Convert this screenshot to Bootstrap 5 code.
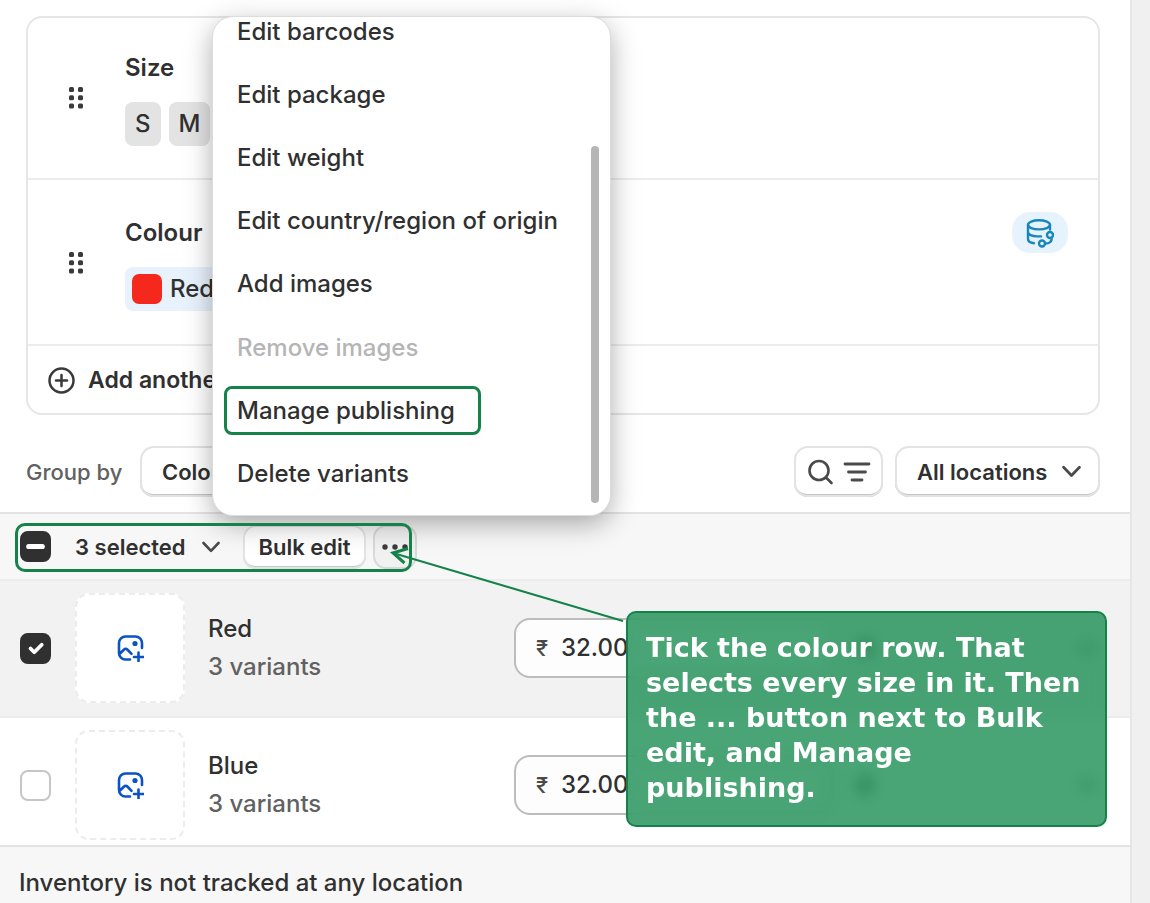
<!DOCTYPE html>
<html lang="en">
<head>
<meta charset="utf-8">
<meta name="viewport" content="width=device-width, initial-scale=1">
<title>Product variants</title>
<link rel="stylesheet" href="https://cdn.jsdelivr.net/npm/bootstrap@5.3.0/dist/css/bootstrap.min.css">
<style>
  :root { --ink: #303030; --muted: #616161; --line: #e3e3e3; --guide: #16824b; }
  body { font-family: Inter, "Liberation Sans", sans-serif; font-size: 24px; font-weight: 450; line-height: 30px; color: var(--ink); background: #f0f0f0; }
  svg { display: block; flex: none; }
  .page { min-height: 100vh; margin-right: 18px; background: #fff; border-right: 2px solid #e6e6e6; }
  .subtle { color: var(--muted); }
  .options { margin: 16px 30px 0 26px; border: 2px solid #e6e6e6; border-radius: 16px; }
  .option { padding: 35px 30px 32px 41px; border-bottom: 2px solid #ececec; }
  .option + .option { padding-top: 38px; padding-bottom: 33px; }
  .option-body { gap: 19px; padding-left: 42px; }
  .grip { margin-bottom: 4px; }
  .heading, .btn { font-weight: 600; }
  .chip { height: 44px; padding: 7px 10px; background: #e3e3e3; border-radius: 8px; }
  .chip-blue { background: #e8f2fd; padding-left: 7px; }
  .swatch { width: 30px; height: 30px; border-radius: 7px; background: #f4281d; }
  .linked { width: 56px; height: 41px; border-radius: 18px; background: #e6f3fd; margin-top: -6px; }
  .btn { font-size: 22px; line-height: 30px; color: var(--ink); border: 0; padding: 0; }
  .add { padding: 19px 20px 18px; }
  .add .btn { gap: 13px; font-size: 23px; }
  .tools { padding: 31px 30px 15px 26px; }
  .tools .subtle { font-size: 22px; width: 98px; white-space: nowrap; }
  .tools .btn { height: 51px; border-radius: 14px; background: #fff; box-shadow: inset 0 0 0 2px #e3e3e3, inset 0 -3px 0 #c4c4c4; }
  .grouping { padding: 0 22px; width: 150px; }
  .finder { width: 89px; }
  .tools .places { width: 205px; margin-left: 12px; padding: 0 19px 0 22px; }
  .bulkbar { height: 67px; padding-left: 20px; background: #f7f7f7; border-top: 2px solid #e3e3e3; }
  .bulkbar .bulk, .bulkbar .more { height: 44px; border-radius: 13px; background: #fff; box-shadow: inset 0 0 0 2px #e3e3e3, inset 0 -3px 0 #c8c8c8; }
  .bulkbar .count { width: 145px; }
  .bulkbar .bulk { width: 123px; margin-left: 23px; }
  .bulkbar .more { width: 44px; margin-left: 7px; background: #f1f1f1; box-shadow: inset 0 0 0 2px #d9d9d9; }
  .form-check-input.tick { width: 31px; height: 31px; margin: 0; border: 2px solid #c6c6c6; border-radius: 8px; flex: none; box-shadow: none; }
  .form-check-input.tick:checked, .form-check-input.tick:indeterminate { background-color: var(--ink); border-color: var(--ink); }
  .form-check-input.tick:checked { background-size: 25px; }
  .form-check-input.tick:indeterminate { background-size: 34px; }
  .product { padding: 12px 20px 5px; border-top: 2px solid #ececec; }
  .product.picked { background: #f2f2f2; padding-bottom: 13px; }
  .thumb { width: 110px; height: 110px; margin-left: 24px; border: 2px dashed #ececec; border-radius: 14px; background: #fff; }
  .who { width: 306px; margin-left: 23px; line-height: 38px; }
  .price { width: 320px; height: 60px; padding-left: 20px; border: 2px solid #bcbcbc; border-radius: 16px; background: #fdfdfd; }
  .price input { font-size: 24px; font-weight: 450; color: var(--ink); border: 0; background: none; padding: 0; margin-left: 10px; width: 200px; }
  .price label { color: #4a4a4a; width: 15px; font-size: 22px; }
  .stock { background: #f7f7f7; border-top: 2px solid var(--line); padding: 21px 19px 5px; }

  .actions { left: 213px; bottom: 64px; width: 397px; height: 498px; border-radius: 20px; background: #fff; overflow: hidden; padding-bottom: 9px; box-shadow: 0 0 0 1px #dcdcdc, 0 8px 28px rgba(0,0,0,.34); z-index: 2; }
  .actions li { flex: 1; }
  .actions li > button { position: relative; width: 100%; height: 100%; border: 0; background: none; padding: 0 24px; text-align: left; font-weight: 450; color: var(--ink); }
  .actions li:first-child { flex: 0 0 44px; }
  .actions li:first-child > button { padding-bottom: 16px; }
  .actions button:disabled { color: #b5b5b5; }
  .thumbbar { right: 11px; bottom: 12px; width: 8px; height: 357px; border-radius: 4px; background: #b5b5b5; }
  .guide-ring { border: 3px solid var(--guide); border-radius: 10px; pointer-events: none; }
  .ring-bar { left: 15px; top: 9px; width: 397px; height: 49px; z-index: 3; }
  .ring-item { left: 11px; top: 7px; width: 257px; height: 49px; border-radius: 8px; }
  .guide-line { left: 380px; top: 30px; z-index: 4; pointer-events: none; }
  .guide-note { left: 626px; top: 97px; width: 481px; padding: 17px 18px 20px; border: 2px solid var(--guide); border-radius: 10px; background: rgba(22,138,80,.78); backdrop-filter: blur(8px); color: #fff; font: bold 27px/35px "DejaVu Sans", sans-serif; z-index: 3; }
</style>
</head>
<body>
<svg class="d-none" aria-hidden="true">
  <symbol id="grip" viewBox="0 0 14 22"><g fill="#3a3a3a"><rect width="5" height="5" rx="1.500"/><rect x="9" width="5" height="5" rx="1.500"/><rect y="8.300" width="5" height="5" rx="1.500"/><rect x="9" y="8.300" width="5" height="5" rx="1.500"/><rect y="16.600" width="5" height="5" rx="1.500"/><rect x="9" y="16.600" width="5" height="5" rx="1.500"/></g></symbol>
  <symbol id="down" viewBox="0 0 18 12"><path d="M1.500 2 9 9.800 16.500 2" fill="none" stroke="#4a4a4a" stroke-width="2.600" stroke-linecap="round" stroke-linejoin="round"/></symbol>
  <symbol id="photo" viewBox="0 0 28 28"><g fill="none" stroke="#0b52c4" stroke-width="2.600" stroke-linecap="round" stroke-linejoin="round"><path d="M14 25.500H9.500A6.500 6.500 0 0 1 3 19V9a6.500 6.500 0 0 1 6.500-6.500h10A6.500 6.500 0 0 1 26 9v5M3.500 20l4.600-4.500a2.200 2.200 0 0 1 3.200 0l4.200 4.300M22.500 18.500v9M18 23h9.500"/></g><circle cx="19" cy="9.500" r="2.600" fill="#0b52c4"/></symbol>
</svg>

<main class="page d-flex flex-column">
  <section class="options">
    <div class="option d-flex align-items-center">
      <svg class="grip" width="14" height="22"><use href="#grip"/></svg>
      <div class="option-body d-flex flex-column flex-grow-1">
        <div class="heading">Size</div>
        <div class="d-flex gap-2"><span class="chip">S</span><span class="chip">M</span></div>
      </div>
    </div>
    <div class="option d-flex align-items-center">
      <svg class="grip" width="14" height="22"><use href="#grip"/></svg>
      <div class="option-body d-flex flex-column flex-grow-1">
        <div class="heading">Colour</div>
        <div class="d-flex"><span class="chip chip-blue d-flex align-items-center gap-2"><span class="swatch"></span>Red</span></div>
      </div>
      <span class="linked d-flex align-items-center justify-content-center align-self-start">
        <svg width="30" height="30" viewBox="0 0 30 30" fill="none" stroke="#1985bd" stroke-width="2.400" stroke-linecap="round"><ellipse cx="14" cy="6.800" rx="11" ry="4.600"/><path d="M3 7v14c0 2.500 2.500 3.800 6 4.200M25 7v4.500M3 14c0 2.600 4 4.400 9 4.400h4"/><circle cx="25" cy="17" r="3"/><circle cx="17" cy="25.500" r="3"/><path d="M26.500 20c.8 3.500-2.500 5.500-6 5.500"/></svg>
      </span>
    </div>
    <div class="add">
      <button type="button" class="btn d-flex align-items-center">
        <svg width="27" height="27" viewBox="0 0 27 27" fill="none" stroke="#3a3a3a" stroke-width="2.500" stroke-linecap="round"><circle cx="13.500" cy="13.500" r="12"/><path d="M13.500 8v11M8 13.500h11"/></svg>
        Add another option
      </button>
    </div>
  </section>

  <div class="tools d-flex align-items-center">
    <span class="subtle">Group by</span>
    <button type="button" class="btn grouping ms-3 text-start">Colour</button>
    <button type="button" class="btn finder ms-auto d-flex align-items-center justify-content-center gap-2" aria-label="Search and filter">
      <svg width="28" height="26" viewBox="0 0 28 26" fill="none" stroke="#4a4a4a" stroke-width="2.600" stroke-linecap="round"><circle cx="12" cy="11.500" r="9.500"/><path d="m19 18.500 5.500 5.500"/></svg>
      <svg width="28" height="20" viewBox="0 0 28 20" stroke="#4a4a4a" stroke-width="2.800" stroke-linecap="round"><path d="M2 2h24M5.500 10h17M9 18h10"/></svg>
    </button>
    <button type="button" class="btn places d-flex align-items-center justify-content-between">All locations<svg width="19" height="13"><use href="#down"/></svg></button>
  </div>

  <div class="bulkbar position-relative d-flex align-items-center">
    <input class="form-check-input tick" type="checkbox" id="all" aria-label="Select all variants">
    <button type="button" class="btn count d-flex align-items-center justify-content-between ms-4">3 selected<svg width="18" height="12"><use href="#down"/></svg></button>
    <button type="button" class="btn bulk">Bulk edit</button>
    <button type="button" class="btn more d-flex align-items-center justify-content-center" aria-label="More actions">
      <svg width="26" height="6" viewBox="0 0 26 6" fill="#3a3a3a"><circle cx="3" cy="3" r="2.700"/><circle cx="13" cy="3" r="2.700"/><circle cx="23" cy="3" r="2.700"/></svg>
    </button>

    <div class="actions position-absolute">
      <ul class="list-unstyled d-flex flex-column mb-0 h-100">
        <li><button type="button">Edit barcodes</button></li>
        <li><button type="button">Edit package</button></li>
        <li><button type="button">Edit weight</button></li>
        <li><button type="button">Edit country/region of origin</button></li>
        <li><button type="button">Add images</button></li>
        <li><button type="button" disabled>Remove images</button></li>
        <li><button type="button">Manage publishing<span class="guide-ring ring-item position-absolute"></span></button></li>
        <li><button type="button">Delete variants</button></li>
      </ul>
      <span class="thumbbar position-absolute"></span>
    </div>

    <span class="guide-ring ring-bar position-absolute"></span>
    <svg class="guide-line position-absolute" width="250" height="84" viewBox="0 0 250 84" fill="none" stroke="#16824b"><path d="M13 9 243 77" stroke-width="2"/><path d="M28 4.500 13 9l11.500 10" stroke-width="3"/></svg>
    <div class="guide-note position-absolute">Tick the colour row. That selects every size in it. Then the ... button next to Bulk edit, and Manage publishing.</div>
  </div>

  <div class="product picked d-flex align-items-center">
    <input class="form-check-input tick" type="checkbox" id="red" aria-label="Select Red" checked>
    <div class="thumb d-flex align-items-center justify-content-center"><svg width="28" height="28"><use href="#photo"/></svg></div>
    <div><label class="who d-block" for="red">Red<br><span class="subtle">3 variants</span></label></div>
    <div class="price d-flex align-items-center"><label for="redprice">₹</label><input id="redprice" type="text" value="32.00"></div>
    <svg class="ms-4" width="14" height="18"><ellipse cx="7" cy="9" rx="7" ry="9" fill="#555"/></svg>
    <svg class="ms-auto me-3" width="14" height="14" viewBox="0 0 14 14"><path d="m1 4 6 6 6-6" fill="none" stroke="#444" stroke-width="4"/></svg>
  </div>
  <div class="product d-flex align-items-center">
    <input class="form-check-input tick" type="checkbox" id="blue" aria-label="Select Blue">
    <div class="thumb d-flex align-items-center justify-content-center"><svg width="28" height="28"><use href="#photo"/></svg></div>
    <div><label class="who d-block" for="blue">Blue<br><span class="subtle">3 variants</span></label></div>
    <div class="price d-flex align-items-center"><label for="blueprice">₹</label><input id="blueprice" type="text" value="32.00"></div>
    <svg class="ms-4" width="14" height="18"><ellipse cx="7" cy="9" rx="7" ry="9" fill="#555"/></svg>
    <svg class="ms-auto me-3" width="14" height="14" viewBox="0 0 14 14"><path d="m1 4 6 6 6-6" fill="none" stroke="#444" stroke-width="4"/></svg>
  </div>
  <footer class="stock flex-grow-1">Inventory is not tracked at any location</footer>
</main>
<script src="https://cdn.jsdelivr.net/npm/bootstrap@5.3.0/dist/js/bootstrap.bundle.min.js"></script>
<script>document.getElementById('all').indeterminate = true;</script>
</body>
</html>
